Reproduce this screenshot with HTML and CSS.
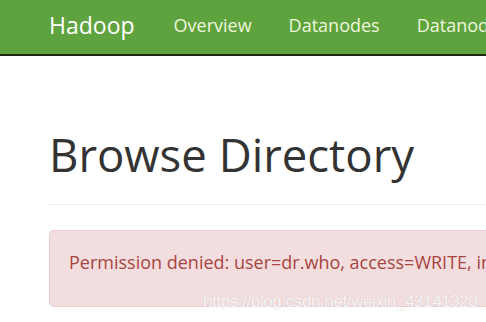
FILE: index.html
```html
<!DOCTYPE html>
<html lang="en">
<head>
    <meta charset="UTF-8">
    <meta name="viewport" content="width=device-width, initial-scale=1.0">
    <title>Browsing HDFS</title>
    <link rel="stylesheet" href="styles.css">
</head>
<body>
    <nav class="navbar">
      <div class="navbar-inner">
        <a class="navbar-brand" href="#">Hadoop</a>
        <ul class="nav">
          <li><a href="#">Overview</a></li>
          <li><a href="#">Datanodes</a></li>
          <li><a href="#">Datanode Volume Failures</a></li>
        </ul>
      </div>
    </nav>

    <div class="container">
      <div class="page-header">
        <h1>Browse Directory</h1>
      </div>
      <div class="alert alert-danger">
        Permission denied: user=dr.who, access=WRITE, inode="/":root:supergroup:drwxr-xr-x
      </div>
    </div>

    <div class="watermark">https://blog.csdn.net/weixin_43141320</div>
</body>
</html>
```

FILE: styles.css
```css
html, body {
  margin: 0;
  padding: 0;
  overflow: hidden;
}

body {
  font-family: "Open Sans", "Noto Sans", "Liberation Sans", sans-serif;
  color: #333;
  background: #fff;
  position: relative;
  height: 322px;
}

.navbar {
  background-color: #5fa33e;
  border-bottom: 2px solid #1d2a14;
  height: 54px;
  overflow: hidden;
}

.navbar-inner {
  display: flex;
  align-items: center;
  height: 100%;
  padding-left: 49px;
  padding-bottom: 4px;
  box-sizing: border-box;
  white-space: nowrap;
}

.navbar-brand {
  color: #fff;
  font-size: 23px;
  text-decoration: none;
  margin-right: 39px;
}

.nav {
  display: flex;
  list-style: none;
  margin: 0;
  padding: 0;
  gap: 37px;
}

.nav a {
  color: #eef6dc;
  font-size: 18px;
  text-decoration: none;
}

.container {
  padding-left: 49px;
}

.page-header {
  border-bottom: 1px solid #eee;
  padding-bottom: 25px;
}

.page-header h1 {
  margin: 73px 0 0;
  font-size: 45.5px;
  font-weight: 400;
  line-height: 50px;
  color: #333;
  white-space: nowrap;
}

.alert {
  margin-top: 25px;
  padding: 18px 19px 30px;
  border: 1px solid #ebccd1;
  border-right: none;
  border-radius: 5px 0 0 5px;
  font-size: 18px;
  line-height: 27px;
  white-space: nowrap;
  overflow: hidden;
}

.alert-danger {
  background-color: #f2dede;
  color: #a94442;
}

.watermark {
  position: absolute;
  left: 203px;
  top: 292px;
  font-family: "Liberation Sans", sans-serif;
  font-size: 17px;
  letter-spacing: -0.4px;
  color: rgba(255, 255, 255, 0.85);
  text-shadow: 0 0 1px rgba(120, 120, 120, 0.35);
  white-space: nowrap;
}
```
